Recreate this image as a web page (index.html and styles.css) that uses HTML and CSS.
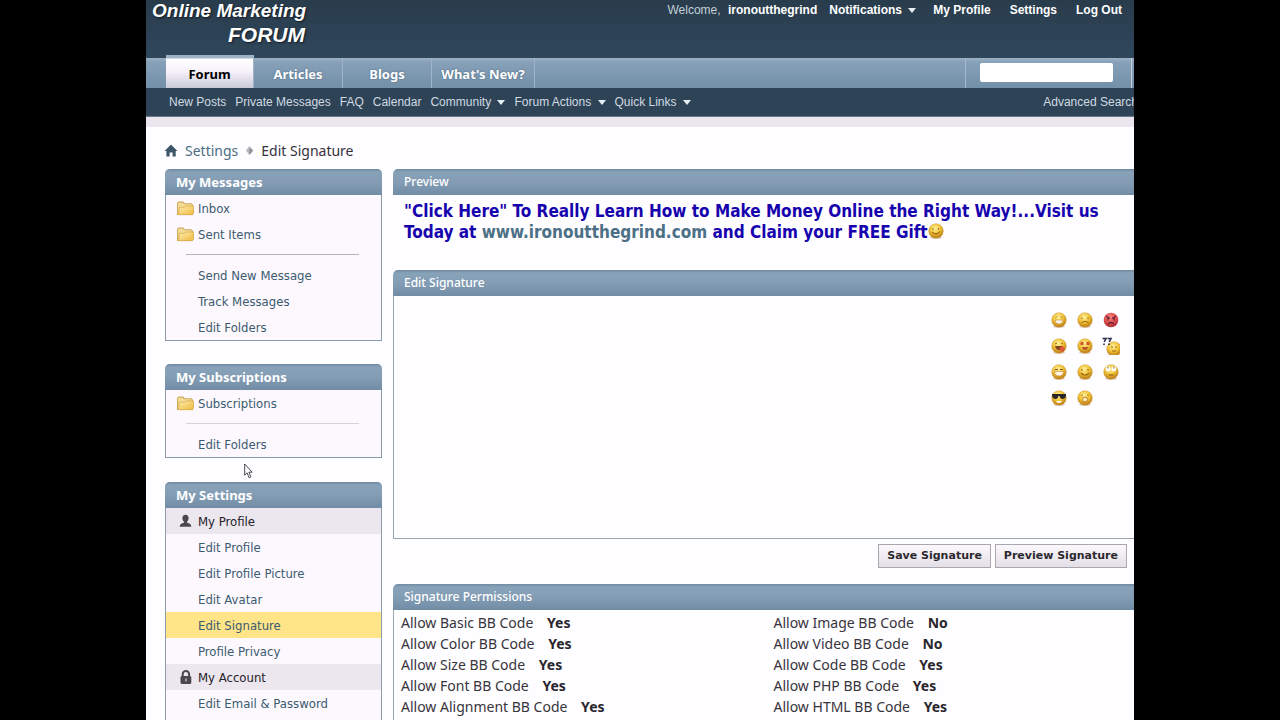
FILE: index.html
```html
<!DOCTYPE html>
<html lang="en">
<head>
<meta charset="utf-8">
<title>Edit Signature</title>
<link rel="stylesheet" href="styles.css">
</head>
<body>
<svg class="defs" width="0" height="0" aria-hidden="true">
  <defs>
    <radialGradient id="gold" cx="45%" cy="32%" r="65%"><stop offset="0" stop-color="#fff2a0"/><stop offset=".55" stop-color="#f0c235"/><stop offset="1" stop-color="#bd7b18"/></radialGradient>
    <radialGradient id="red" cx="45%" cy="32%" r="65%"><stop offset="0" stop-color="#f88a80"/><stop offset=".6" stop-color="#e04c4c"/><stop offset="1" stop-color="#b03038"/></radialGradient>
    <linearGradient id="fold" x1="0" y1="0" x2="1" y2="1"><stop offset="0" stop-color="#fdf0b4"/><stop offset="1" stop-color="#efb83c"/></linearGradient>
    <symbol id="folder" viewBox="0 0 16 14"><path d="M.5 12.500V2.200L1.500 1h4.200l1.200 1.600h6.600l1 1V12.500z" fill="#f3dd98" stroke="#cfac5c"/><path d="M1.500 12.800 2.200 5.800h5L8.400 4.600h7.100v7.200l-1 1z" fill="url(#fold)" stroke="#dcae4c" stroke-width=".8"/></symbol>
    <symbol id="ball" viewBox="0 0 16 16"><ellipse cx="8" cy="14.6" rx="6" ry="1.2" fill="#c7aba4" opacity=".6"/><circle cx="8" cy="8" r="7.3" fill="url(#gold)" stroke="#d0a044" stroke-width=".5"/></symbol>
  </defs>
</svg>
<div class="page">
<div class="sheet">
  <header class="top">
    <h1 class="logo"><span class="logo-a">Online Marketing</span><span class="logo-b">FORUM</span></h1>
    <nav class="user" aria-label="Account">
      <span class="welcome">Welcome, <a href="#">ironoutthegrind</a></span>
      <a class="notes" href="#">Notifications <i class="caret"></i></a>
      <a href="#">My Profile</a><a href="#">Settings</a><a href="#">Log Out</a>
    </nav>
  </header>
  <div class="bar">
    <nav class="tabs" aria-label="Sections">
      <a class="on" href="#">Forum</a><a href="#">Articles</a><a href="#">Blogs</a><a class="wide" href="#">What's New?</a>
    </nav>
    <form class="search"><input type="search" aria-label="Search"><span class="edge"></span></form>
  </div>
  <nav class="sub" aria-label="Forum links">
    <a href="#">New Posts</a><a href="#">Private Messages</a><a href="#">FAQ</a><a href="#">Calendar</a><a href="#">Community <i class="caret"></i></a><a href="#">Forum Actions <i class="caret"></i></a><a href="#">Quick Links <i class="caret"></i></a>
    <a class="advanced" href="#">Advanced Search</a>
  </nav>
  <div class="strip"></div>
  <nav class="crumbs" aria-label="Breadcrumb">
    <svg width="14" height="13" viewBox="0 0 14 13"><path d="M7 .5 13.4 7H11.7v5.5H8.6V8.6H5.6v3.9H2.4V7H.6z" fill="#3d5568"/></svg>
    <a href="#">Settings</a>
    <svg class="sep" width="7" height="9" viewBox="0 0 7 9"><path d="M3.500 0 7 4.500 3.500 9 0 4.500z" fill="#b9b4bd"/><path d="M3.500 1.500 7 4.500 3.500 9z" fill="#918b96"/></svg>
    <span>Edit Signature</span>
  </nav>
  <div class="cols">
    <aside class="side">
      <section class="box">
        <h2>My Messages</h2>
        <a href="#"><svg class="ico" width="17" height="15"><use href="#folder"/></svg>Inbox</a>
        <a href="#"><svg class="ico" width="17" height="15"><use href="#folder"/></svg>Sent Items</a>
        <hr>
        <a href="#">Send New Message</a><a href="#">Track Messages</a><a href="#">Edit Folders</a>
      </section>
      <section class="box">
        <h2>My Subscriptions</h2>
        <a href="#"><svg class="ico" width="17" height="15"><use href="#folder"/></svg>Subscriptions</a>
        <hr class="faint">
        <a href="#">Edit Folders</a>
        <svg class="cursor" width="9" height="16" viewBox="0 0 9 16"><path d="M.7 1v11.2l2.4-2.4 2 5 1.8-.9-2-4.7h3.3z" fill="#fff" stroke="#4b454c"/></svg>
      </section>
      <section class="box last">
        <h2>My Settings</h2>
        <h3><svg class="ico" width="17" height="14" viewBox="0 0 17 14"><path d="M8.5.7c2 0 3.1 1.3 3.1 3.2 0 1.7-.7 2.8-1.5 3.5v1.3c2.5.4 4.1 1.3 4.2 4H2.7c.1-2.7 1.7-3.6 4.2-4V7.4C6.1 6.7 5.4 5.6 5.4 3.9 5.4 2 6.500.7 8.500.7z" fill="#4a474e"/></svg>My Profile</h3>
        <a href="#">Edit Profile</a><a href="#">Edit Profile Picture</a><a href="#">Edit Avatar</a>
        <a class="current" href="#">Edit Signature</a><a href="#">Profile Privacy</a>
        <h3><svg class="ico" width="17" height="15" viewBox="0 0 17 15"><path d="M5.700 7V4.300a3.200 3.200 0 0 1 6.400 0V7" fill="none" stroke="#4a474e" stroke-width="2"/><rect x="3.500" y="6" width="10.800" height="8" rx="1.500" fill="#4a474e"/><path d="M8.200 8.500h1.500v3H8.200z" fill="#b9b3bb"/></svg>My Account</h3>
        <a href="#">Edit Email &amp; Password</a>
      </section>
    </aside>
    <main class="main">
      <section>
        <h2 class="head">Preview</h2>
        <p class="preview">"Click Here" To Really Learn How to Make Money Online the Right Way!...Visit us<br>Today at <a href="#">www.ironoutthegrind.com</a> and Claim your FREE Gift<svg width="16" height="16" viewBox="0 0 16 16"><use href="#ball"/><path d="M5 5.200v1.600M10.500 5.200v1.600M4 9q4 4 8-.5" fill="none" stroke="#8a5414"/></svg></p>
      </section>
      <form>
        <h2 class="head"><label for="sig">Edit Signature</label></h2>
        <div class="editor">
          <textarea id="sig"></textarea>
          <div class="smilies">
            <svg viewBox="0 0 16 16"><use href="#ball"/><path d="M4.500 6 6 4.500M10 4.500 11.500 6" stroke="#99621a"/><path d="M4 8h8q0 4-4 4T4 8z" fill="#fff4ea" stroke="#c28434" stroke-width=".6"/></svg>
            <svg viewBox="0 0 16 16"><use href="#ball"/><path d="M5 5.500v1.700M11 5.500v1.700M4.500 10.500Q8 8 11.500 10.500" fill="none" stroke="#99621a"/></svg>
            <svg viewBox="0 0 16 16"><circle cx="8" cy="8" r="7.300" fill="url(#red)"/><path d="m3 4 4 2.500M13 4 9 6.500M5 6v2.500M11 6v2.500M5 12q3-3 6 0" fill="none" stroke="#672035" stroke-width="1.300"/></svg>
            <svg viewBox="0 0 16 16"><use href="#ball"/><path d="m4 6 2-1M10 5l2 1" stroke="#99621a"/><path d="M4 8h8q-1 4-4 4T4 8z" fill="#7d4320"/><circle cx="11" cy="11" r="2.500" fill="#e1523c"/></svg>
            <svg viewBox="0 0 16 16"><use href="#ball"/><path d="M3.500 4h3v3h-3zM9.500 4h3v3h-3z" fill="#cd522b"/><path d="M5 9h6q-.5 3-3 3T5 9z" fill="#b9532c"/></svg>
            <svg class="puzzled" viewBox="0 0 18 18"><svg x="4" y="4" width="14" height="14" viewBox="0 0 16 16"><use href="#ball"/></svg><path d="M.5 1.500h3.500L2.200 5M5.500 1.500h3.500L7.200 5M2 6.500v1.500M7 6.500v1.500" fill="none" stroke="#2c2c49" stroke-width="1.600"/><path d="M9 10h2M13 10h2M10 14h4" stroke="#99621a"/></svg>
            <svg viewBox="0 0 16 16"><use href="#ball"/><path d="M4 5.500h3M9 5.500h3" stroke="#83551c"/><path d="M3.500 7.500h9q-.5 4.500-4.500 4.500T3.500 7.500z" fill="#fff8ea" stroke="#c28434" stroke-width=".6"/></svg>
            <svg viewBox="0 0 16 16"><use href="#ball"/><path d="M5 5v1.700M11 5v1.700M4 9q4 4.500 8 0" fill="none" stroke="#99621a" stroke-width="1.200"/></svg>
            <svg viewBox="0 0 16 16"><use href="#ball"/><circle cx="5" cy="5" r="2.400" fill="#fff"/><circle cx="11" cy="5" r="2.400" fill="#fff"/><path d="M5 3v1.500M11 3v1.500M5.500 11h5" stroke="#805016"/></svg>
            <svg viewBox="0 0 16 16"><use href="#ball"/><path d="M1 4h14v2q-1 3-3.500 3T8.600 6H7.400Q7 9 4.500 9T1 6z" fill="#272529"/><path d="M5 11h6q-1 2-3 2t-3-2z" fill="#fff"/></svg>
            <svg viewBox="0 0 16 16"><use href="#ball"/><path d="M5 4.500v1.700M11 4.500v1.700" stroke="#99621a"/><circle cx="8" cy="9.500" r="2.400" fill="#fff0c4" stroke="#bd7a24"/></svg>
          </div>
        </div>
        <div class="actions"><button type="submit">Save Signature</button><button type="button">Preview Signature</button></div>
      </form>
      <section>
        <h2 class="head">Signature Permissions</h2>
        <div class="perms">
          <div>Allow Basic BB Code <b>Yes</b></div><div>Allow Image BB Code <b>No</b></div>
          <div>Allow Color BB Code <b>Yes</b></div><div>Allow Video BB Code <b>No</b></div>
          <div>Allow Size BB Code <b>Yes</b></div><div>Allow Code BB Code <b>Yes</b></div>
          <div>Allow Font BB Code <b>Yes</b></div><div>Allow PHP BB Code <b>Yes</b></div>
          <div>Allow Alignment BB Code <b>Yes</b></div><div>Allow HTML BB Code <b>Yes</b></div>
        </div>
      </section>
    </main>
  </div>
</div>
</div>
</body>
</html>
```
FILE: styles.css
```css
* { box-sizing: border-box; }
body { margin: 0; background: #000; height: 100vh; overflow: hidden; font-family: "Noto Sans", sans-serif; }
h1, h2, h3, p { margin: 0; }
a { color: inherit; text-decoration: none; }
.defs { position: absolute; }
.page { margin: 0 146px; background: #fefdff; overflow: hidden; height: 100vh; }
/* The forum is a little wider than the window that shows it */
.sheet { margin-right: -12px; }
.caret { display: inline-block; border: 4px solid transparent; border-top: 5px solid #e6eef4; border-bottom: 0; margin-left: 3px; vertical-align: 1px; }

.top { height: 58px; background: linear-gradient(#293c4c, #30475b); display: flex; justify-content: space-between; color: #fff; }
.logo { display: flex; flex-direction: column; padding-left: 6px; width: 159px; font: italic bold 19px/22px "Liberation Sans", sans-serif; white-space: nowrap; text-shadow: 1px 1px 2px #101a24; }
.logo-b { align-self: flex-end; font-size: 21px; font-weight: 900; line-height: 26px; }
.user { display: flex; gap: 19px; padding-right: 24px; font: bold 12px/20px "Liberation Sans", sans-serif; white-space: nowrap; }
.welcome { font-weight: normal; color: #c3ced8; margin-right: -7px; }
.welcome a { font-weight: bold; color: #fff; margin-left: 4px; }
.notes { margin-right: -2px; }

.bar { height: 30px; background: linear-gradient(#9bb0c4, #86a0b8 15%, #7390a9); display: flex; justify-content: space-between; padding-left: 20px; }
.tabs { display: flex; font: bold 13px/32px "Noto Sans", sans-serif; color: #fff; }
.tabs a { width: 89px; text-align: center; border-right: 1px solid #9fb4c7; text-shadow: 0 0 2px #49647c; }
.tabs .wide { width: 103px; }
.tabs .on { width: 88px; margin-top: -3px; padding-top: 3px; color: #000; background: linear-gradient(#9fb4c6 3px, #fff 4px, #f6f1fa 50%, #c9cad9); text-shadow: none; }
.search { display: flex; gap: 18px; border-left: 1px solid #a5b9cb; padding-left: 14px; width: 181px; }
.search input { width: 133px; height: 19px; margin-top: 5px; border: 0; border-radius: 2px; background: #fff; padding: 0 4px; }
.edge { border-left: 1px solid #c2d0dc; }
.sub { height: 29px; background: #2e4456; border-bottom: 1px solid #66788a; display: flex; gap: 9px; padding: 0 0 0 23px; font: 12px/28px "Liberation Sans", sans-serif; color: #d0dae3; white-space: nowrap; }
.advanced { margin-left: auto; padding-right: 8px; }
.strip { height: 10px; background: #eae5ee; }

.crumbs { display: flex; align-items: center; gap: 7px; height: 42px; padding: 4px 0 0 18px; font-size: 14px; color: #37313c; }
.crumbs a { color: #4d6d81; }
.sep { margin: 0 1px; }
.cols { display: flex; gap: 11px; padding-left: 19px; }
.side { flex: 0 0 217px; }
.box { position: relative; border: 1px solid #8c9bab; border-top: 0; border-radius: 5px 5px 0 0; margin-bottom: 23px; background: #fdf8fe; line-height: 26px; }
.last { margin-top: 24px; padding-bottom: 20px; }
.box h2, .head { background: linear-gradient(#6f889f, #88a2ba 3px, #849db5 50%, #718ca5); color: #fff; height: 26px; border-radius: 5px 5px 0 0; font-size: 13px; line-height: 26px; }
.box h2 { margin: 0 -1px; padding-left: 11px; }
.box a, .box h3 { display: flex; align-items: center; height: 26px; padding-left: 32px; font: 13px "DejaVu Sans Condensed", "Noto Sans", sans-serif; color: #3b5b70; }
.box h3 { background: #ece6ee; color: #26222a; }
.box .current { background: #ffe588; }
.ico { margin: 0 4px 0 -21px; }
.box hr { border: 0; border-top: 1px solid #b8b4bc; margin: 7px 22px 7px 20px; }
.box .faint { border-color: #d6d2da; }
.cursor { position: absolute; left: 78px; top: 99px; }

.main { flex: 1; min-width: 0; }
.main .head { padding-left: 11px; font-size: 12px; font-weight: 500; }
.preview { height: 75px; padding: 6px 0 0 11px; font: bold 17px/21px "DejaVu Sans Condensed", "Noto Sans", sans-serif; color: #1703ae; white-space: nowrap; }
.preview a { color: #4c7086; }
.preview svg { vertical-align: -1px; }
.editor { display: flex; height: 243px; border: 1px solid #9ca7b2; border-top: 0; }
.editor textarea { flex: 1; border: 0; background: none; resize: none; padding: 8px; outline: 0; font: 14px "Noto Sans", sans-serif; }
.smilies { display: grid; grid-template-columns: repeat(3, 16px); gap: 10px; align-content: start; padding: 16px 26px 0 0; }
.smilies svg { width: 16px; height: 16px; }
.smilies .puzzled { width: 18px; height: 18px; margin: -1px; }
.actions { display: flex; justify-content: flex-end; gap: 4px; padding: 5px 19px 16px 0; }
.actions button { height: 24px; padding: 0 8px; border: 1px solid #aaa6ae; background: linear-gradient(#fbf8fc, #e4dfe7); color: #2d2930; font: bold 11px/20px "DejaVu Sans", sans-serif; white-space: nowrap; }
.perms { display: grid; grid-template-columns: 1fr 1fr; border-left: 1px solid #9ca7b2; padding: 2px 0 20px 7px; font-size: 14px; line-height: 21px; color: #38343c; }
.perms b { margin-left: 10px; color: #2a262e; }
```
